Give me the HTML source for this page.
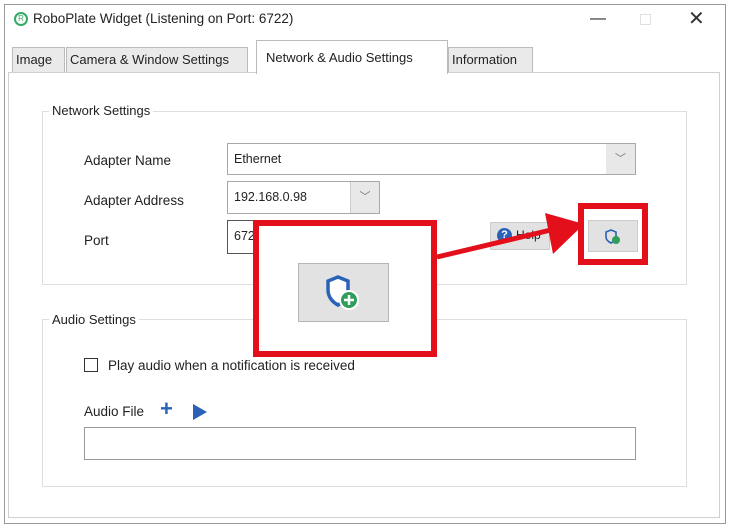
<!DOCTYPE html>
<html><head><meta charset="utf-8"><style>
*{box-sizing:border-box;margin:0;padding:0}
body{width:729px;height:530px;background:#fff;position:relative;overflow:hidden;font-family:"Liberation Sans",sans-serif;font-size:13px;color:#222}
.a{position:absolute}
.win{left:4px;top:4px;width:722px;height:520px;border:1px solid #9a9a9a;background:#fff}
.panel{left:8px;top:72px;width:712px;height:446px;border:1px solid #d0d0d0;background:#fff}
.grp{border:1px solid #dedede}
.lbl{background:#fff;padding:0 3px;font-size:13px}
.box{border:1px solid #a8a8a8;background:#fff;padding-left:6px;line-height:30px;font-size:12.5px}
.tab{top:47px;height:25px;border:1px solid #bcbcbc;border-bottom:none;background:#eaeaea;font-size:13px;line-height:24px;padding:0 3px;white-space:nowrap;overflow:hidden}
</style></head><body>
<div class="a win"></div>
<div class="a" style="left:14px;top:12px;width:14px;height:14px;border-radius:50%;border:2px solid #3a6;font-size:8px;line-height:10px;text-align:center;color:#3a6">R</div>
<div class="a" style="left:33px;top:11px;font-size:13.5px">RoboPlate Widget (Listening on Port: 6722)</div>
<div class="a" style="left:590px;top:10px;font-size:16px">—</div>
<div class="a" style="left:640px;top:14px;width:11px;height:11px;border:1px solid #e0e0e0"></div>
<div class="a" style="left:688px;top:6px;font-size:20px;color:#333">✕</div>
<div class="a panel"></div>
<div class="a tab" style="left:12px;width:53px">Image</div>
<div class="a tab" style="left:66px;width:182px">Camera &amp; Window Settings</div>
<div class="a tab" style="left:256px;top:40px;height:34px;width:192px;background:#fff;line-height:34px;padding-left:9px">Network &amp; Audio Settings</div>
<div class="a tab" style="left:448px;width:85px">Information</div>

<div class="a grp" style="left:42px;top:111px;width:645px;height:174px"></div>
<div class="a lbl" style="left:49px;top:103px">Network Settings</div>
<div class="a" style="left:84px;top:153px;font-size:13.5px">Adapter Name</div>
<div class="a" style="left:84px;top:193px;font-size:13.5px">Adapter Address</div>
<div class="a" style="left:84px;top:233px;font-size:13.5px">Port</div>
<div class="a box" style="left:227px;top:143px;width:409px;height:32px;line-height:30px">Ethernet</div>
<div class="a" style="left:606px;top:144px;width:29px;height:30px;background:#e8e8e8;color:#777;text-align:center;line-height:30px;font-size:11px">﹀</div>
<div class="a box" style="left:227px;top:181px;width:153px;height:33px">192.168.0.98</div>
<div class="a" style="left:350px;top:182px;width:29px;height:31px;background:#e8e8e8;border-left:1px solid #ccc;color:#777;text-align:center;line-height:30px;font-size:11px">﹀</div>
<div class="a box" style="left:227px;top:220px;width:40px;height:34px;border-color:#555">672</div>
<div class="a" style="left:490px;top:222px;width:60px;height:28px;background:#e2e2e2;border:1px solid #ccc"></div>
<div class="a" style="left:497px;top:228px;width:15px;height:15px;border-radius:50%;background:#2a62b8;color:#fff;font-size:11px;font-weight:bold;text-align:center;line-height:15px">?</div>
<div class="a" style="left:516px;top:228px;font-size:12px">Help</div>
<div class="a" style="left:588px;top:220px;width:50px;height:32px;background:#e2e2e2;border:1px solid #ccc"></div>
<svg class="a" style="left:604px;top:228px" width="18" height="18" viewBox="0 0 18 18"><path d="M7 2 L2 4 V9 C2 12 5 14 7 15 C9 14 12 12 12 9 V4 Z" fill="none" stroke="#2a62b8" stroke-width="1.6"/><circle cx="12" cy="12" r="4" fill="#2e9e5a"/></svg>

<div class="a grp" style="left:42px;top:319px;width:645px;height:168px"></div>
<div class="a lbl" style="left:49px;top:312px">Audio Settings</div>
<div class="a" style="left:84px;top:358px;width:14px;height:14px;border:1px solid #333"></div>
<div class="a" style="left:108px;top:358px;font-size:13.5px">Play audio when a notification is received</div>
<div class="a" style="left:84px;top:404px;font-size:13.5px">Audio File</div>
<div class="a" style="left:160px;top:396px;font-size:22px;color:#2a62b8;font-weight:bold">+</div>
<div class="a" style="left:193px;top:404px;width:0;height:0;border-left:14px solid #2a62b8;border-top:8px solid transparent;border-bottom:8px solid transparent"></div>
<div class="a" style="left:84px;top:427px;width:552px;height:33px;border:1px solid #999"></div>

<div class="a" style="left:253px;top:220px;width:184px;height:137px;border:6px solid #e3101c;background:#fff"></div>
<div class="a" style="left:298px;top:263px;width:91px;height:59px;background:#e2e2e2;border:1px solid #b5b5b5"></div>
<svg class="a" style="left:324px;top:275px" width="42" height="36" viewBox="0 0 42 36"><path d="M14 2 L4 6 V15 C4 23 10 28 14 30 C18 28 24 23 24 15 V6 Z" fill="#fff" stroke="#2a62b8" stroke-width="3.5"/><circle cx="25" cy="25" r="9" fill="#2e9e5a" stroke="#fff" stroke-width="2"/><path d="M25 20 V30 M20 25 H30" stroke="#fff" stroke-width="2.5"/></svg>
<div class="a" style="left:578px;top:203px;width:70px;height:62px;border:6px solid #e3101c"></div>
<svg class="a" style="left:0;top:0" width="729" height="530"><line x1="437" y1="257" x2="555" y2="229" stroke="#e3101c" stroke-width="5"/><polygon points="545,213 553,254 584,224" fill="#e3101c"/></svg>
</body></html>
